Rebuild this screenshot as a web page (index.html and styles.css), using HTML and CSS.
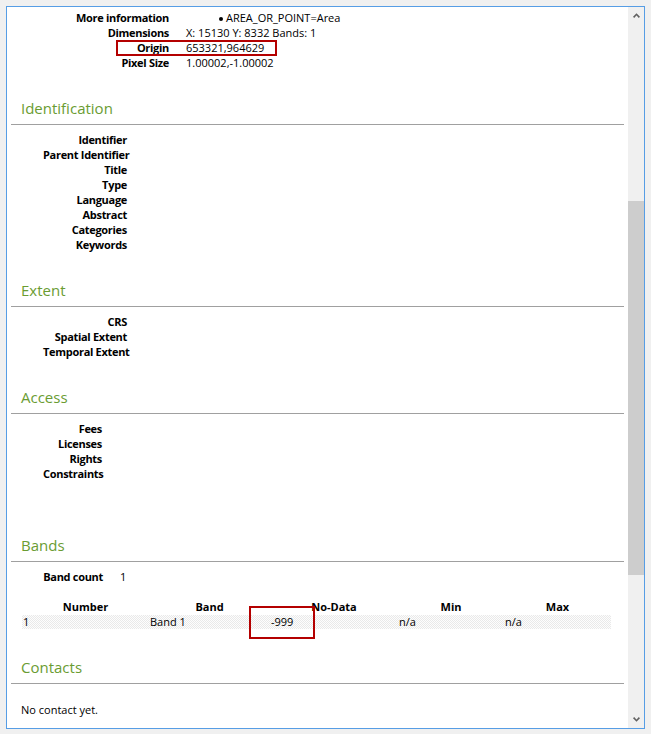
FILE: index.html
```html
<!DOCTYPE html>
<html>
<head>
<meta charset="utf-8">
<link rel="stylesheet" href="styles.css">
</head>
<body>
<div class="frame">
  <div class="content">
    <div class="kv kv-top">
      <div class="k">More information</div><div class="v"><span class="bullet"></span>AREA_OR_POINT=Area</div>
      <div class="k">Dimensions</div><div class="v">X: 15130 Y: 8332 Bands: 1</div>
      <div class="k">Origin</div><div class="v">653321,964629</div>
      <div class="k">Pixel Size</div><div class="v">1.00002,-1.00002</div>
    </div>

    <h2 class="title">Identification</h2>
    <div class="kv kv-wide">
      <div class="k">Identifier</div><div class="v"></div>
      <div class="k">Parent Identifier</div><div class="v"></div>
      <div class="k">Title</div><div class="v"></div>
      <div class="k">Type</div><div class="v"></div>
      <div class="k">Language</div><div class="v"></div>
      <div class="k">Abstract</div><div class="v"></div>
      <div class="k">Categories</div><div class="v"></div>
      <div class="k">Keywords</div><div class="v"></div>
    </div>

    <h2 class="title">Extent</h2>
    <div class="kv kv-wide">
      <div class="k">CRS</div><div class="v"></div>
      <div class="k">Spatial Extent</div><div class="v"></div>
      <div class="k">Temporal Extent</div><div class="v"></div>
    </div>

    <h2 class="title">Access</h2>
    <div class="kv kv-access">
      <div class="k">Fees</div><div class="v"></div>
      <div class="k">Licenses</div><div class="v"></div>
      <div class="k">Rights</div><div class="v"></div>
      <div class="k">Constraints</div><div class="v"></div>
    </div>

    <h2 class="title">Bands</h2>
    <div class="kv kv-bands">
      <div class="k">Band count</div><div class="v">1</div>
    </div>
    <div class="bands">
      <div class="bands-row bands-head">
        <div>Number</div><div>Band</div><div>No-Data</div><div>Min</div><div>Max</div>
      </div>
      <div class="bands-row bands-data">
        <div>1</div><div>Band 1</div><div>-999</div><div>n/a</div><div>n/a</div>
      </div>
    </div>

    <h2 class="title">Contacts</h2>
    <p class="note">No contact yet.</p>

    <div class="mark mark-origin"></div>
    <div class="mark mark-nodata"></div>
  </div>
  <div class="scrollbar">
    <div class="sb-btn">
      <svg width="7" height="5" viewBox="0 0 7 5"><polyline points="0.6,4.4 3.5,1.3 6.4,4.4" fill="none" stroke="#606060" stroke-width="1.6"/></svg>
    </div>
    <div class="sb-thumb"></div>
    <div class="sb-btn sb-down">
      <svg width="7" height="5" viewBox="0 0 7 5"><polyline points="0.6,0.6 3.5,3.7 6.4,0.6" fill="none" stroke="#606060" stroke-width="1.6"/></svg>
    </div>
  </div>
</div>
</body>
</html>
```

FILE: styles.css
```css
body {
  margin: 0;
  background: #f0f0f0;
  font-family: "Open Sans", "Noto Sans", sans-serif;
  font-size: 11px;
  color: #000;
}

.frame {
  margin: 6px;
  width: 639px;
  height: 723px;
  box-sizing: border-box;
  border: 1px solid #569de5;
  display: flex;
  background: #fff;
}

.content {
  flex: 1;
  position: relative;
  overflow: hidden;
  padding-top: 3px;
}

.kv {
  display: grid;
  grid-template-columns: 84px auto;
  column-gap: 17px;
  padding-left: 36px;
  line-height: 15px;
}

.kv .k {
  text-align: right;
  font-weight: bold;
  letter-spacing: -0.3px;
  white-space: nowrap;
}

.kv .v {
  white-space: nowrap;
}

.kv-top {
  grid-template-columns: 126px auto;
}

.kv-access {
  grid-template-columns: 59px auto;
  margin-bottom: 52px;
}

.kv-bands {
  grid-template-columns: 60px auto;
}

.bullet {
  display: inline-block;
  width: 4px;
  height: 4px;
  border-radius: 50%;
  background: #000;
  margin: 0 3px 1px 33px;
  vertical-align: middle;
}

.title {
  margin: 26px 4px 7px 4px;
  padding: 0 0 4px 10px;
  font-size: 15px;
  font-weight: normal;
  line-height: 24px;
  color: #6a9c32;
  border-bottom: 1px solid #a0a0a0;
}

.bands {
  margin-top: 15px;
  padding-left: 15px;
}

.bands-row {
  display: grid;
  grid-template-columns: 127px 121px 128px 106px 107px;
  width: 589px;
}

.bands-head {
  line-height: 15px;
  font-weight: bold;
  text-align: center;
}

.bands-data {
  margin-top: 1px;
  height: 14px;
  line-height: 14px;
  background: repeating-conic-gradient(#e9e9e9 0 25%, #fdfdfd 0 50%) 0 0 / 2px 2px;
}

.bands-data div {
  padding-left: 1px;
}

.note {
  margin: 18px 0 0 0;
  padding-left: 14px;
  line-height: 15px;
}

.mark {
  position: absolute;
  border: 2px solid #b40000;
  box-sizing: border-box;
}

.mark-origin {
  left: 109px;
  top: 33px;
  width: 161px;
  height: 16px;
}

.mark-nodata {
  left: 242px;
  top: 599px;
  width: 66px;
  height: 33px;
}

.scrollbar {
  width: 16px;
  background: #f0f0f0;
  display: flex;
  flex-direction: column;
}

.sb-btn {
  height: 17px;
  display: flex;
  align-items: center;
  justify-content: center;
}

.sb-down {
  margin-top: auto;
}

.sb-thumb {
  margin-top: 177px;
  height: 374px;
  background: #cdcdcd;
}
```
